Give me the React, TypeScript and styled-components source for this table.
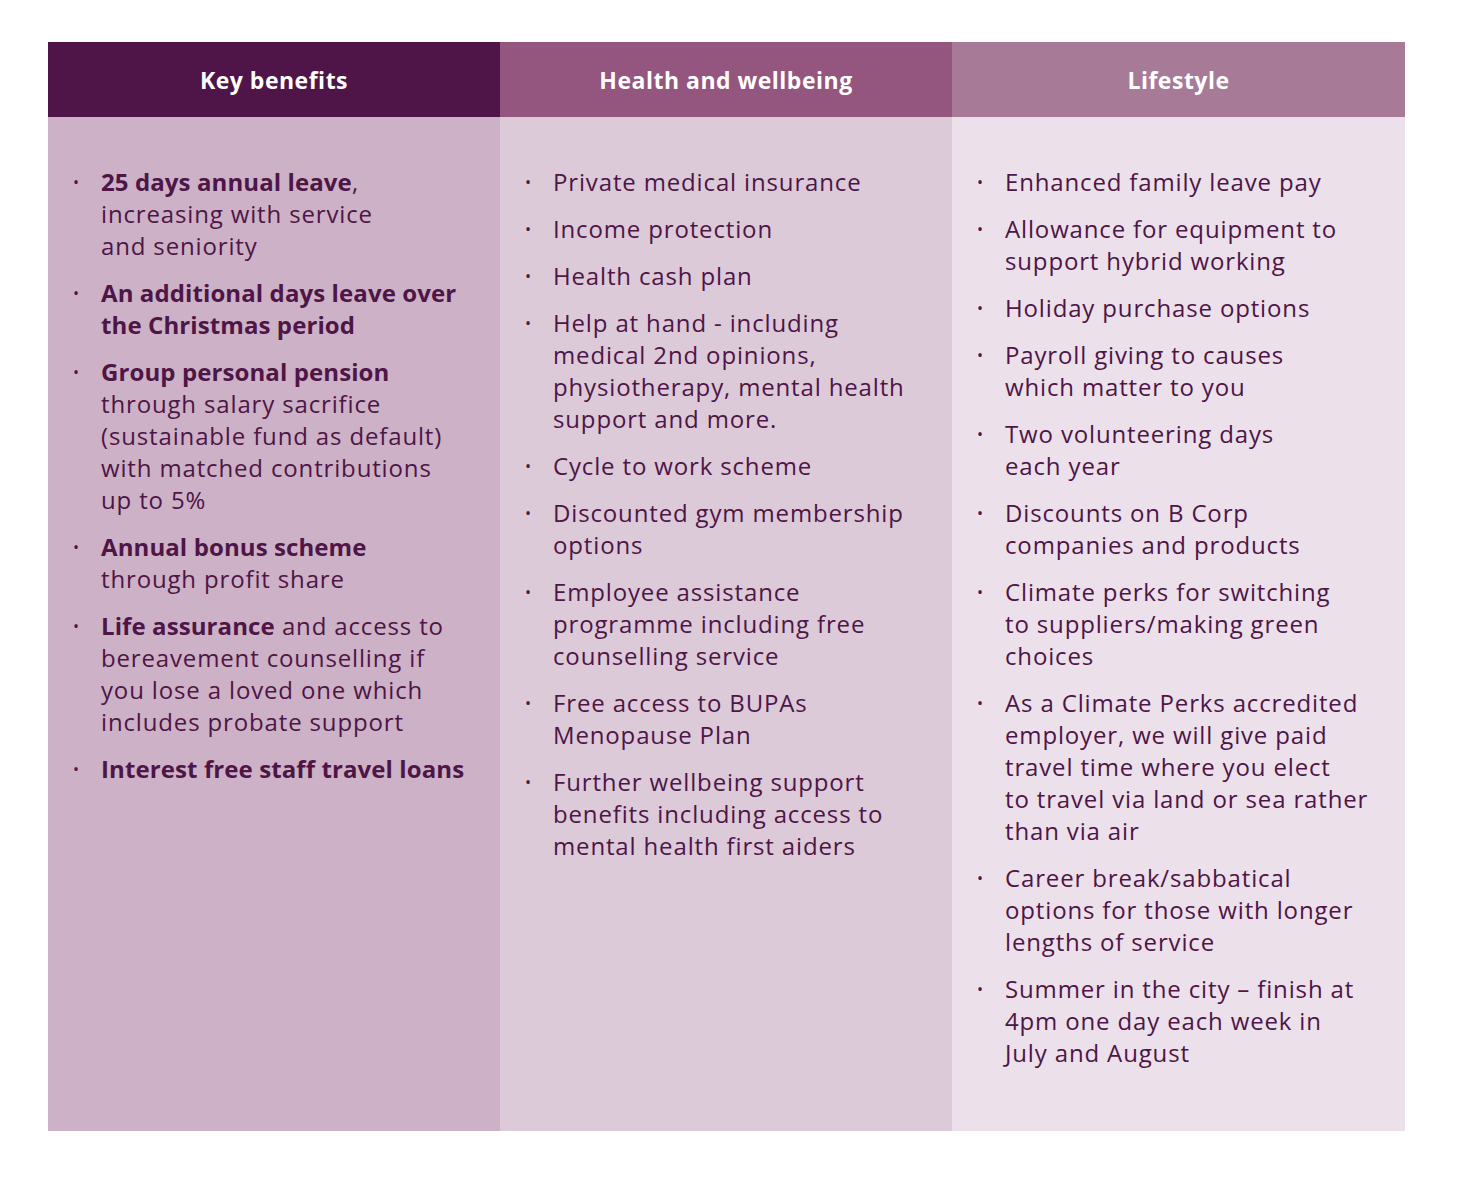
import React from "react";
import styled, { createGlobalStyle } from "styled-components";

const GlobalStyle = createGlobalStyle`
  html, body { margin: 0; padding: 0; background: #ffffff; }
  body { font-family: "Open Sans", Lato, sans-serif; }
`;

const Page = styled.div`
  padding: 42px 53px 51px 48px;
`;

const Table = styled.div`
  display: grid;
  grid-template-columns: 452px 452px 453px;
  grid-template-rows: 75px 1014px;
`;

const Head = styled.div<{ $bg: string }>`
  background: ${(p) => p.$bg};
  color: #ffffff;
  font-family: "Open Sans", sans-serif;
  font-weight: 700;
  font-size: 23px;
  letter-spacing: 0.5px;
  display: flex;
  align-items: center;
  justify-content: center;
`;

const Body = styled.ul<{ $bg: string }>`
  background: ${(p) => p.$bg};
  margin: 0;
  padding: 49px 0 0 53px;
  list-style: none;
  display: flex;
  flex-direction: column;
  gap: 15px;
`;

const Item = styled.li`
  position: relative;
  color: #4e1547;
  font-size: 24px;
  line-height: 32px;
  letter-spacing: 0.85px;
  white-space: nowrap;
  &::before {
    content: "•";
    position: absolute;
    left: -28px;
    top: 0;
    font-size: 16px;
    line-height: 32px;
  }
`;

const Strong = styled.b`
  font-weight: 700;
  letter-spacing: 0.1px;
`;

type Col = { title: string; head: string; body: string; items: React.ReactNode[][] };

const cols: Col[] = [
  {
    title: "Key benefits",
    head: "#4f1548",
    body: "#cdb1c6",
    items: [
      [<><Strong>25 days annual leave</Strong>,</>, "increasing with service", "and seniority"],
      [<Strong>An additional days leave over</Strong>, <Strong>the Christmas period</Strong>],
      [
        <Strong>Group personal pension</Strong>,
        "through salary sacrifice",
        "(sustainable fund as default)",
        "with matched contributions",
        "up to 5%",
      ],
      [<Strong>Annual bonus scheme</Strong>, "through profit share"],
      [
        <><Strong>Life assurance</Strong> and access to</>,
        "bereavement counselling if",
        "you lose a loved one which",
        "includes probate support",
      ],
      [<Strong>Interest free staff travel loans</Strong>],
    ],
  },
  {
    title: "Health and wellbeing",
    head: "#94557f",
    body: "#dccad9",
    items: [
      ["Private medical insurance"],
      ["Income protection"],
      ["Health cash plan"],
      [
        "Help at hand - including",
        "medical 2nd opinions,",
        "physiotherapy, mental health",
        "support and more.",
      ],
      ["Cycle to work scheme"],
      ["Discounted gym membership", "options"],
      ["Employee assistance", "programme including free", "counselling service"],
      ["Free access to BUPAs", "Menopause Plan"],
      ["Further wellbeing support", "benefits including access to", "mental health first aiders"],
    ],
  },
  {
    title: "Lifestyle",
    head: "#a77a98",
    body: "#ece1ea",
    items: [
      ["Enhanced family leave pay"],
      ["Allowance for equipment to", "support hybrid working"],
      ["Holiday purchase options"],
      ["Payroll giving to causes", "which matter to you"],
      ["Two volunteering days", "each year"],
      ["Discounts on B Corp", "companies and products"],
      ["Climate perks for switching", "to suppliers/making green", "choices"],
      [
        "As a Climate Perks accredited",
        "employer, we will give paid",
        "travel time where you elect",
        "to travel via land or sea rather",
        "than via air",
      ],
      ["Career break/sabbatical", "options for those with longer", "lengths of service"],
      ["Summer in the city \u2013 finish at", "4pm one day each week in", "July and August"],
    ],
  },
];

export default function App() {
  return (
    <>
      <GlobalStyle />
      <Page>
        <Table>
          {cols.map((c) => (
            <Head key={c.title} $bg={c.head}>
              {c.title}
            </Head>
          ))}
          {cols.map((c) => (
            <Body key={c.title + "b"} $bg={c.body}>
              {c.items.map((lines, i) => (
                <Item key={i}>
                  {lines.map((l, j) => (
                    <React.Fragment key={j}>
                      {j > 0 && <br />}
                      {l}
                    </React.Fragment>
                  ))}
                </Item>
              ))}
            </Body>
          ))}
        </Table>
      </Page>
    </>
  );
}
